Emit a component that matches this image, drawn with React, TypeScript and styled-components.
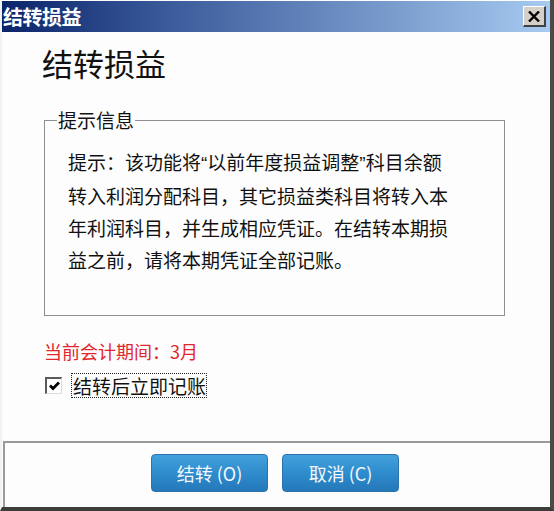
import React from 'react';
import styled, { createGlobalStyle } from 'styled-components';

const GlobalStyle = createGlobalStyle`
  html, body {
    margin: 0;
    padding: 0;
    background: #ffffff;
  }
  body {
    font-family: "Noto Sans CJK SC", "Liberation Sans", sans-serif;
  }
`;

const App: React.FC = (): React.ReactElement => {
  return (
    <>
      <GlobalStyle />
      <Window>
        <TitleBar>
          <TitleText>结转损益</TitleText>
          <CloseButton aria-label="关闭">
            <svg width="12" height="11" viewBox="0 0 12 11">
              <path d="M1 0.5 L11 10.5 M11 0.5 L1 10.5" stroke="#000" strokeWidth="2.4" />
            </svg>
          </CloseButton>
        </TitleBar>

        <Body>
          <Heading>结转损益</Heading>

          <GroupBox>
            <Legend>提示信息</Legend>
            <HintLine>
              提示：该功能将<Quote>“</Quote>以前年度损益调整<Quote>”</Quote>科目余额
            </HintLine>
            <HintLine>转入利润分配科目，其它损益类科目将转入本</HintLine>
            <HintLine>年利润科目，并生成相应凭证。在结转本期损</HintLine>
            <HintLine>益之前，请将本期凭证全部记账。</HintLine>
          </GroupBox>

          <PeriodLabel>当前会计期间：3月</PeriodLabel>

          <CheckRow>
            <CheckBox>
              <svg width="11" height="10" viewBox="0 0 11 10">
                <path d="M1 4.5 L4 7.5 L10 1.5" fill="none" stroke="#000" strokeWidth="2.8" />
              </svg>
            </CheckBox>
            <CheckLabel>结转后立即记账</CheckLabel>
          </CheckRow>
        </Body>

        <Footer>
          <ActionButton>结转 (O)</ActionButton>
          <ActionButton>取消 (C)</ActionButton>
        </Footer>
      </Window>
    </>
  );
};

const Window = styled.div`
  display: flex;
  flex-direction: column;
  width: 554px;
  height: 511px;
  box-sizing: border-box;
  background: #fdfdfd;
  border-left: 2px solid #f2f2f2;
  border-right: 4px solid #4a4a4a;
  border-bottom: 4px solid #3c3c3c;
`;

const TitleBar = styled.div`
  display: flex;
  align-items: center;
  justify-content: space-between;
  height: 31px;
  margin-top: 1px;
  padding: 0 4px 0 1px;
  background: linear-gradient(to right, #0a246a 0%, #3a5a9a 30%, #a6caf0 100%);
  flex-shrink: 0;
`;

const TitleText = styled.span`
  color: #ffffff;
  font-size: 20px;
  font-weight: 700;
  line-height: 1;
  letter-spacing: -0.5px;
`;

const CloseButton = styled.div`
  display: flex;
  align-items: center;
  justify-content: center;
  width: 23px;
  height: 21px;
  box-sizing: border-box;
  background: #d4d0c8;
  border-top: 1px solid #ffffff;
  border-left: 1px solid #ffffff;
  border-right: 2px solid #404040;
  border-bottom: 2px solid #404040;
`;

const Body = styled.div`
  display: flex;
  flex-direction: column;
  flex: 1;
  padding: 0 0 0 40px;
`;

const Heading = styled.h1`
  margin: 13px 0 0 0;
  font-size: 31px;
  font-weight: 400;
  line-height: 36px;
  color: #111;
`;

const GroupBox = styled.fieldset`
  width: 461px;
  height: 207px;
  box-sizing: border-box;
  margin: 28px 0 0 2px;
  padding: 15px 0 0 23px;
  border: 1px solid #8e8e8e;
  min-inline-size: 0;
`;

const Legend = styled.legend`
  margin-left: -11px;
  padding: 0 1px;
  font-size: 19px;
  line-height: 22px;
  color: #111;
`;

const HintLine = styled.div`
  font-size: 19px;
  line-height: 32px;
  color: #111;
  white-space: nowrap;
`;

const Quote = styled.span`
  font-family: "Liberation Sans", sans-serif;
`;

const PeriodLabel = styled.div`
  margin-top: 24px;
  font-size: 18px;
  line-height: 22px;
  color: #e2262e;
  padding-left: 2px;
`;

const CheckRow = styled.div`
  display: flex;
  align-items: center;
  gap: 9px;
  margin-top: 11px;
  padding-left: 3px;
`;

const CheckBox = styled.span`
  display: flex;
  align-items: center;
  justify-content: center;
  width: 17px;
  height: 17px;
  box-sizing: border-box;
  background: #ffffff;
  border-top: 2px solid #5a5a5a;
  border-left: 2px solid #5a5a5a;
  border-right: 1px solid #dcdcdc;
  border-bottom: 1px solid #dcdcdc;
`;

const CheckLabel = styled.span`
  font-size: 19px;
  line-height: 23px;
  color: #111;
  border: 1px dotted #222;
  padding: 0 0 0 1px;
`;

const Footer = styled.div`
  display: flex;
  align-items: center;
  gap: 14px;
  height: 64px;
  margin-left: 1px;
  padding-left: 146px;
  border-top: 2px solid #9a9a9a;
  border-left: 2px solid #9a9a9a;
  flex-shrink: 0;
`;

const ActionButton = styled.button`
  width: 117px;
  height: 38px;
  padding: 0;
  border: 1px solid #2a73ad;
  border-radius: 4px;
  background: linear-gradient(to bottom, #42a1dc 0%, #2f8ccd 50%, #2478b8 100%);
  color: #f4f8fc;
  font-family: "Noto Sans CJK SC", "Liberation Sans", sans-serif;
  font-size: 18px;
  line-height: 1;
  margin-top: -4px;
`;

export default App;
